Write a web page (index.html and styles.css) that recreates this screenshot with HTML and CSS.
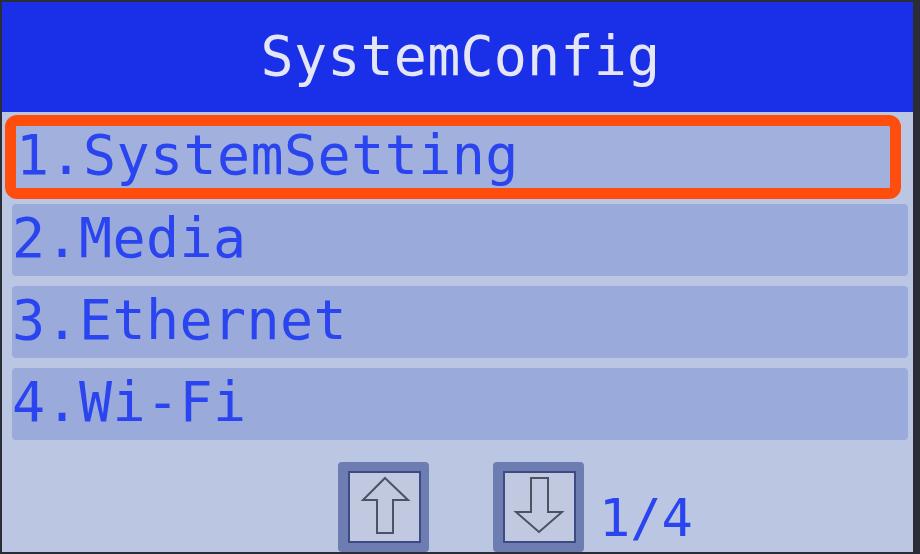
FILE: index.html
```html
<!DOCTYPE html>
<html>
<head>
<meta charset="utf-8">
<link rel="stylesheet" href="styles.css">
</head>
<body>
<div class="screen">
  <div class="header">SystemConfig</div>
  <div class="list">
    <div class="row selected">1.SystemSetting</div>
    <div class="row">2.Media</div>
    <div class="row">3.Ethernet</div>
    <div class="row">4.Wi-Fi</div>
  </div>
  <div class="footer">
    <div class="btn">
      <div class="btn-inner">
        <svg viewBox="0 0 69 68" width="69" height="68">
          <polygon points="35,5 58,27 43,27 43,60 27,60 27,27 13,27" />
        </svg>
      </div>
    </div>
    <div class="btn btn-down">
      <div class="btn-inner">
        <svg viewBox="0 0 69 68" width="69" height="68">
          <polygon points="26,5 43,5 43,39 57,39 34,59 11,39 26,39" />
        </svg>
      </div>
    </div>
    <div class="page">1/4</div>
  </div>
</div>
</body>
</html>
```
FILE: styles.css
```css
html, body {
  margin: 0;
  padding: 0;
}
body {
  width: 920px;
  height: 554px;
  background: #2b2d36;
  overflow: hidden;
  padding: 2px 6px 2px 2px;
  box-sizing: border-box;
}
.screen {
  width: 911px;
  height: 550px;
  background: #bac6e2;
  overflow: hidden;
  display: flex;
  flex-direction: column;
  font-family: "DejaVu Sans Mono", "Liberation Mono", monospace;
}
.header {
  height: 110px;
  flex: none;
  background: #1a30e8;
  color: #e4e6f3;
  font-size: 55px;
  line-height: 108px;
  text-align: center;
  padding-left: 6px;
  letter-spacing: 0.2px;
}
.list {
  display: flex;
  flex-direction: column;
  gap: 10px;
  padding: 3px 4px 0 10px;
}
.row {
  height: 72px;
  width: 896px;
  box-sizing: border-box;
  background: #9aaadb;
  border-radius: 4px;
  color: #2a44ef;
  font-size: 55px;
  line-height: 68px;
  letter-spacing: 0.4px;
  padding-left: 0;
  white-space: nowrap;
}
.row.selected {
  height: 84px;
  margin-left: -7px;
  margin-bottom: -5px;
  border: 11px solid #ff4d0d;
  border-radius: 12px;
  background: #a1b0dd;
  line-height: 59px;
  padding-left: 0;
}
.footer {
  display: flex;
  align-items: flex-start;
  padding: 22px 0 0 336px;
}
.btn {
  width: 91px;
  height: 90px;
  box-sizing: border-box;
  background: #6d7db1;
  border-radius: 4px;
  padding: 9px 9px 9px 10px;
  flex: none;
}
.btn-down {
  margin-left: 64px;
}
.btn-inner {
  width: 73px;
  height: 72px;
  box-sizing: border-box;
  border: 2px solid #3d4a85;
  background: #c0c9e0;
}
.btn-inner svg {
  display: block;
}
.btn-inner polygon {
  fill: none;
  stroke: #4d5263;
  stroke-width: 2;
  stroke-linejoin: miter;
}
.page {
  margin: 26px 0 0 15px;
  font-size: 52px;
  line-height: 60px;
  color: #2a44ef;
}
```
